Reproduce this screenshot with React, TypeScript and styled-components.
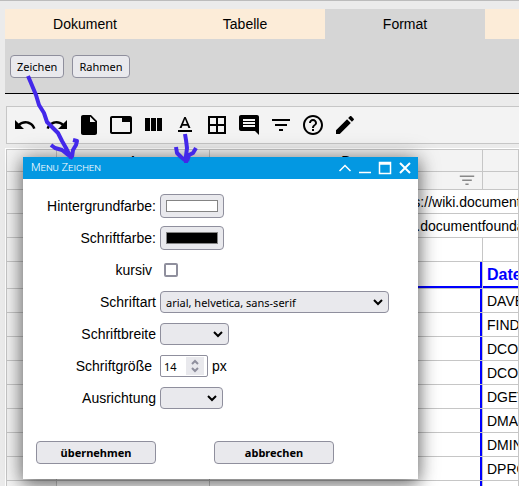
import React from "react";
import styled, { createGlobalStyle, css } from "styled-components";

const GlobalStyle = createGlobalStyle`
  * { box-sizing: border-box; }
  html, body { margin: 0; background: #ebebeb; overflow: hidden; }
  body { font-family: "Liberation Sans", Arial, sans-serif; font-size: 14px; color: #000; }
`;

const line = "#c6c6c6";
const uiFont = '"Noto Sans", sans-serif';

const Page = styled.div`
  position: relative;
  height: 100vh;
  overflow: hidden;
  border-top: 1px solid #bcbcbc;
  padding: 8px 0 0 5px;
`;

const Tabs = styled.nav`
  display: flex;
  overflow: hidden;
  background: #fcecd8;
`;

const Tab = styled.button<{ $active?: boolean }>`
  flex: 0 0 160px;
  height: 30px;
  border: 0;
  padding: 0;
  font: 14px/30px "Liberation Sans", Arial, sans-serif;
  color: #000;
  background: ${(p) => (p.$active ? "#d6d6d6" : "#fcecd8")};
`;

const Panel = styled.div`
  display: flex;
  align-items: center;
  gap: 8px;
  height: 55px;
  padding: 0 5px;
  background: #d6d6d6;
  border-bottom: 1px solid #000;
`;

const control = css`
  border: 1px solid #8f8f9d;
  border-radius: 4px;
  background: #e9e9ed;
  color: #000;
  font-family: ${uiFont};
  font-size: 11px;
`;

const Button = styled.button<{ $wide?: boolean }>`
  ${control}
  height: 23px;
  padding: 0 6px;
  line-height: 21px;
  ${(p) => p.$wide && css`width: 120px; font-weight: 700;`}
`;

const Toolbar = styled.div`
  display: flex;
  gap: 8px;
  margin: 12px 0 0 1px;
  padding: 6px;
  border: 1px solid ${line};
  border-right: 0;
  background: #f3f3f3;
`;

const ToolButton = styled.button`
  flex: none;
  width: 24px;
  height: 24px;
  padding: 0;
  border: 0;
  background: none;
  svg { display: block; fill: #000; }
`;

const Sheet = styled.div`
  margin-top: 4px;
  border-top: 1px solid #fff;
  border-left: 1px solid #fff;
`;

const Table = styled.table`
  width: 100%;
  table-layout: fixed;
  border-collapse: separate;
  border-spacing: 0;
  border: 1px solid ${line};
  border-width: 1px 0 0 1px;
  background: #fff;
`;

const Col = styled.col<{ $w?: number }>`
  ${(p) => p.$w && `width: ${p.$w}px;`}
`;

const Row = styled.tr<{ $h?: number }>`
  height: ${(p) => p.$h ?? 24}px;
`;

const Head = styled.th`
  padding: 0;
  border: 1px solid ${line};
  border-width: 0 1px 1px 0;
  background: #f3f3f3;
  font-weight: 400;
  line-height: 16px;
  svg { display: block; margin: 0 7px 0 auto; fill: #888; }
`;

const Cell = styled.td<{ $indent?: number; $blue?: "right" | "corner" | "bottom" }>`
  padding: 0 0 0 ${(p) => p.$indent ?? 4}px;
  border: 1px solid ${line};
  border-width: 0 1px 1px 0;
  overflow: hidden;
  white-space: nowrap;
  font-size: 14px;
  line-height: 16px;
  ${(p) => p.$blue === "right" && "box-shadow: inset -2px 0 #00f;"}
  ${(p) => p.$blue === "corner" && "box-shadow: inset -2px -2px #00f;"}
  ${(p) => p.$blue === "bottom" && "box-shadow: inset 0 -2px #00f; color: #00f; font-size: 16px; font-weight: 700;"}
`;

const Dialog = styled.section`
  position: absolute;
  left: 23px;
  top: 156px;
  width: 395px;
  height: 322px;
  background: #fff;
  box-shadow: 0 0 20px rgba(0, 0, 0, 0.35), 0 6px 16px rgba(0, 0, 0, 0.4);
`;

const TitleBar = styled.header`
  display: flex;
  align-items: center;
  gap: 8px;
  height: 22px;
  padding: 0 7px 0 8px;
  background: #0398e2;
  color: #fff;
`;

const Title = styled.h1`
  flex: 1;
  margin: 0;
  font: 300 11px/22px Roboto, sans-serif;
  font-variant: small-caps;
`;

const WindowButton = styled.button`
  width: 12px;
  height: 14px;
  padding: 0;
  border: 0;
  background: none;
  svg { display: block; overflow: visible; fill: none; stroke: #fff; }
`;

const Form = styled.form`
  padding: 11px 13px 0 0;
`;

const Field = styled.div`
  display: grid;
  grid-template-columns: 133px auto 1fr;
  column-gap: 4px;
  align-items: center;
  height: 32px;
`;

const Label = styled.label<{ $spaced?: boolean }>`
  text-align: right;
  padding-right: ${(p) => (p.$spaced ? 4 : 0)}px;
  line-height: 20px;
`;

const ColorInput = styled.input`
  ${control}
  appearance: none;
  width: 64px;
  height: 24px;
  padding: 5px;
  &::-webkit-color-swatch-wrapper { padding: 0; }
  &::-webkit-color-swatch { border: 1px solid #848484; border-radius: 0; }
`;

const Check = styled.input`
  appearance: none;
  width: 14px;
  height: 14px;
  margin: 0 0 0 4px;
  border: 2px solid #8f8f9d;
  border-radius: 2px;
  background: #fff;
`;

const Picker = styled.span`
  position: relative;
  display: block;
  svg {
    position: absolute;
    right: 6px;
    top: 6px;
    fill: none;
    stroke: #000;
    stroke-width: 2;
    pointer-events: none;
  }
`;

const Select = styled.select<{ $w: number }>`
  ${control}
  display: block;
  appearance: none;
  width: ${(p) => p.$w}px;
  height: 22px;
  padding: 0 20px 0 5px;
`;

const NumberInput = styled.input`
  ${control}
  display: block;
  appearance: textfield;
  width: 48px;
  height: 22px;
  padding: 0 0 0 3px;
  border-radius: 2px;
  background: #fff;
  &::-webkit-inner-spin-button { appearance: none; }
`;

const Spinner = styled.span`
  position: absolute;
  right: 4px;
  top: 2px;
  width: 18px;
  height: 18px;
  background: #e9e9ed;
  pointer-events: none;
  svg { right: 5px; top: 2px; stroke: #8f8f9d; }
`;

const Actions = styled.div`
  display: flex;
  gap: 58px;
  margin-top: 27px;
  padding-left: 13px;
`;

const Ink = styled.svg`
  position: absolute;
  left: 0;
  top: -1px;
  fill: none;
  stroke: #4328ea;
  stroke-width: 4;
  stroke-linejoin: round;
  pointer-events: none;
`;

const tools = [
  ["Rückgängig", "M12.5 8c-2.65 0-5.05.99-6.9 2.6L2 7v9h9l-3.62-3.62c1.39-1.16 3.16-1.88 5.12-1.88 3.54 0 6.55 2.31 7.6 5.5l2.37-.78C21.08 11.03 17.15 8 12.5 8z"],
  ["Wiederholen", "M18.4 10.6C16.55 8.99 14.15 8 11.5 8c-4.65 0-8.58 3.03-9.96 7.22L3.9 16c1.05-3.19 4.05-5.5 7.6-5.5 1.95 0 3.73.72 5.12 1.88L13 16h9V7l-3.6 3.6z"],
  ["Datei", "M6 2c-1.1 0-1.99.9-1.99 2L4 20c0 1.1.89 2 1.99 2H18c1.1 0 2-.9 2-2V8l-6-6H6zm7 7V3.5L18.5 9H13z"],
  ["Tabellenblatt", "M21 3H3c-1.1 0-2 .9-2 2v14c0 1.1.9 2 2 2h18c1.1 0 2-.9 2-2V5c0-1.1-.9-2-2-2zm0 16H3V5h10v4h8v10z"],
  ["Spalten", "M10 18h5V5h-5v13zM4 18h5V5H4v13zM16 5v13h5V5h-5z"],
  ["Zeichen", "M5 17h14v2H5zM9.5 12.8h5l.9 2.2h2.1L12.75 4h-1.5L6.5 15h2.1zM12 5.98L13.87 11h-3.74z"],
  ["Rahmen", "M3 3v18h18V3H3zm8 16H5v-6h6v6zm0-8H5V5h6v6zm8 8h-6v-6h6v6zm0-8h-6V5h6v6z"],
  ["Kommentar", "M21.99 4c0-1.1-.89-2-1.99-2H4c-1.1 0-2 .9-2 2v12c0 1.1.9 2 2 2h14l4 4-.01-18zM18 14H6v-2h12v2zm0-3H6V9h12v2zm0-3H6V6h12v2z"],
  ["Filter", "M10 18h4v-2h-4v2zM3 6v2h18V6H3zm3 7h12v-2H6v2z"],
  ["Hilfe", "M11 18h2v-2h-2v2zm1-16C6.48 2 2 6.48 2 12s4.48 10 10 10 10-4.48 10-10S17.52 2 12 2zm0 18c-4.41 0-8-3.59-8-8s3.59-8 8-8 8 3.59 8 8-3.59 8-8 8zm0-14c-2.21 0-4 1.79-4 4h2c0-1.1.9-2 2-2s2 .9 2 2c0 2-3 1.75-3 5h2c0-2.25 3-2.5 3-5 0-2.21-1.79-4-4-4z"],
  ["Bearbeiten", "M3 17.25V21h3.75L17.81 9.94l-3.75-3.75L3 17.25zM20.71 7.04c.39-.39.39-1.02 0-1.41l-2.34-2.34c-.39-.39-1.02-.39-1.41 0l-1.83 1.83 3.75 3.75 1.83-1.83z"],
];

const functions = ["DAVERAGE", "FIND", "DCOUNT", "DCOUNTA", "DGET", "DMAX", "DMIN", "DPRODUCT", ""];

const Chevron = () => (
  <svg width="10" height="10" viewBox="0 0 10 10"><path d="M1 3l4 4 4-4" /></svg>
);

const windowButtons = [
  ["Einklappen", "M0.5 10L6 4.5l5.5 5.5", 1.5],
  ["Minimieren", "M0 11.5h12", 1.5],
  ["Maximieren", "M.5 1.5h11v11H.5zM0 3h12", 1.5],
  ["Schließen", "M1 2l10 10M11 2L1 12", 2],
] as const;

export default function App() {
  return (
    <Page>
      <GlobalStyle />
      <Tabs>
        <Tab>Dokument</Tab>
        <Tab>Tabelle</Tab>
        <Tab $active>Format</Tab>
      </Tabs>
      <Panel>
        <Button>Zeichen</Button>
        <Button>Rahmen</Button>
      </Panel>
      <Toolbar>
        {tools.map(([name, d]) => (
          <ToolButton key={name} aria-label={name}>
            <svg width="24" height="24" viewBox="0 0 24 24"><path d={d} /></svg>
          </ToolButton>
        ))}
      </Toolbar>
      <Sheet>
        <Table>
          <colgroup><Col $w={50} /><Col $w={153} /><Col $w={273} /><Col /></colgroup>
          <thead>
            <Row $h={22}><Head /><Head>A</Head><Head>B</Head><Head /></Row>
            <Row $h={18}>
              <Head /><Head />
              <Head><svg width="16" height="16" viewBox="2 3 20 20"><path d={tools[8][1]} /></svg></Head>
              <Head />
            </Row>
          </thead>
          <tbody>
            <Row><Head /><Cell /><Cell colSpan={2} $indent={180}>https://wiki.documentfoundation.org</Cell></Row>
            <Row><Head /><Cell /><Cell colSpan={2} $indent={141}>https://wiki.documentfoundation.org</Cell></Row>
            <Row><Head /><Cell /><Cell /><Cell /></Row>
            <Row $h={27}><Head /><Cell /><Cell $blue="corner" /><Cell $blue="bottom">Datenbank</Cell></Row>
            {functions.map((name, i) => (
              <Row key={i}><Head /><Cell /><Cell $blue="right" /><Cell>{name}</Cell></Row>
            ))}
          </tbody>
        </Table>
      </Sheet>
      <Dialog aria-labelledby="dialog-title">
        <TitleBar>
          <Title id="dialog-title">Menu Zeichen</Title>
          {windowButtons.map(([name, d, w]) => (
            <WindowButton key={name} aria-label={name}>
              <svg width="12" height="14" viewBox="0 0 12 14"><path d={d} strokeWidth={w} /></svg>
            </WindowButton>
          ))}
        </TitleBar>
        <Form>
          <Field>
            <Label htmlFor="background">Hintergrundfarbe:</Label>
            <ColorInput id="background" type="color" defaultValue="#ffffff" />
          </Field>
          <Field>
            <Label htmlFor="color">Schriftfarbe:</Label>
            <ColorInput id="color" type="color" defaultValue="#000000" />
          </Field>
          <Field>
            <Label htmlFor="italic" $spaced>kursiv</Label>
            <Check id="italic" type="checkbox" />
          </Field>
          <Field>
            <Label htmlFor="family">Schriftart</Label>
            <Picker>
              <Select id="family" $w={229}><option>arial, helvetica, sans-serif</option></Select>
              <Chevron />
            </Picker>
          </Field>
          <Field>
            <Label htmlFor="weight">Schriftbreite</Label>
            <Picker><Select id="weight" $w={69}><option /></Select><Chevron /></Picker>
          </Field>
          <Field>
            <Label htmlFor="size" $spaced>Schriftgröße</Label>
            <Picker>
              <NumberInput id="size" type="number" defaultValue={14} />
              <Spinner>
                <svg width="8" height="14" viewBox="0 0 8 14"><path d="M1 5l3-3 3 3M1 9l3 3 3-3" /></svg>
              </Spinner>
            </Picker>
            <span>px</span>
          </Field>
          <Field>
            <Label htmlFor="align">Ausrichtung</Label>
            <Picker><Select id="align" $w={63}><option /></Select><Chevron /></Picker>
          </Field>
          <Actions>
            <Button type="button" $wide>übernehmen</Button>
            <Button type="button" $wide>abbrechen</Button>
          </Actions>
        </Form>
      </Dialog>
      <Ink width="210" height="170" viewBox="0 0 210 170" aria-hidden="true">
        <path d="M28 76l3 7 5 12 3 10 5 8 3 9 6 6 5 5 4 8 4 7 5 10M51 145l4 3 7 2 5 4 6 4M72 157l1-7 3-5 1-4-4-1" />
        <path d="M185 134l1 6 1 8-1 8v7M176 147l1 6 4 4 5 4M187 161l2-6 4-2 3-5" />
      </Ink>
    </Page>
  );
}
